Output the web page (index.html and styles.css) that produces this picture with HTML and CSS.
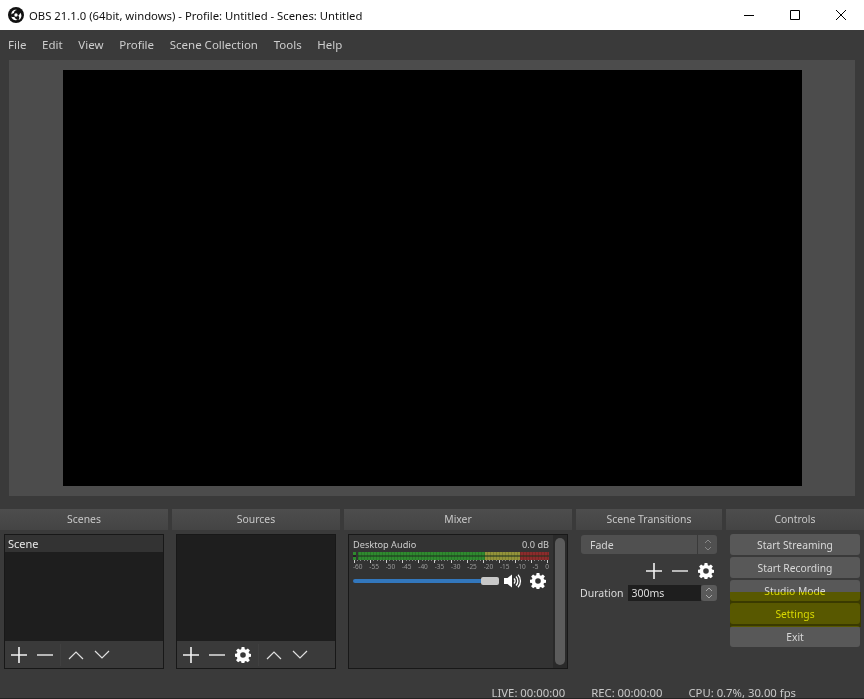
FILE: index.html
```html
<!DOCTYPE html>
<html lang="en">
<head>
<meta charset="utf-8">
<title>OBS</title>
<link rel="stylesheet" href="styles.css">
</head>
<body>
<svg class="defs" width="0" height="0">
  <defs>
    <symbol id="plus" viewBox="0 0 16 16"><path d="M8 0v16M0 8h16" stroke="#f2f2f2" stroke-width="1.6" fill="none"/></symbol>
    <symbol id="minus" viewBox="0 0 16 16"><path d="M0 8h16" stroke="#d8d8d8" stroke-width="1.6" fill="none"/></symbol>
    <symbol id="up" viewBox="0 0 16 16"><path d="M1 12l7-7 7 7" stroke="#e0e0e0" stroke-width="1.2" fill="none"/></symbol>
    <symbol id="down" viewBox="0 0 16 16"><path d="M1 4l7 7 7-7" stroke="#e0e0e0" stroke-width="1.2" fill="none"/></symbol>
    <symbol id="gear" viewBox="0 0 16 16"><path fill="#fff" fill-rule="evenodd" d="M6.600 0h2.800l.4 2.200 1.200.5 1.900-1.300 2 2-1.300 1.900.5 1.200 1.900.4v2.800l-2 .4-.5 1.200 1.300 1.900-2 2-1.900-1.300-1.200.5-.4 2H6.600l-.4-2-1.200-.5-1.900 1.300-2-2 1.300-1.900-.5-1.200-1.900-.4V6.800l1.900-.4.5-1.200L1.100 3.400l2-2L5 2.700l1.200-.5zM8 5.200a2.800 2.800 0 1 0 0 5.600 2.800 2.800 0 0 0 0-5.600z"/></symbol>
  </defs>
</svg>
<header class="titlebar">
  <svg class="logo" viewBox="0 0 16 16" width="16" height="16">
    <circle cx="8" cy="8" r="8" fill="#111"/>
    <path d="M3.500 7.500C3 4.500 6 2 9 3c-1.800.2-3 1.200-3 3-1 .2-1.900.7-2.500 1.500zM12.300 5.800c2 2.200 1.300 6-1.800 7.200 1-1.400 1.200-3-.2-4.200.7-.8 1.700-1.800 2-3zM3.200 9.500c.7 3 4 4.600 6.700 3.300-1.700-.3-3-1.200-3.500-3-1.200.4-2.200.4-3.200-.3z" fill="#fff"/>
    <circle cx="8" cy="8" r="1.700" fill="#fff"/>
  </svg>
  <span class="title-text">OBS 21.1.0 (64bit, windows) - Profile: Untitled - Scenes: Untitled</span>
  <div class="win-controls">
    <svg width="12" height="12" viewBox="0 0 12 12"><path d="M1 6.500h10" stroke="#000" fill="none"/></svg>
    <svg width="12" height="12" viewBox="0 0 12 12"><path d="M1.500 1.500h9v9h-9z" stroke="#000" fill="none"/></svg>
    <svg width="12" height="12" viewBox="0 0 12 12"><path d="M1 1l10 10M11 1L1 11" stroke="#000" fill="none"/></svg>
  </div>
</header>
<nav class="menubar">
  <span>File</span><span>Edit</span><span>View</span><span>Profile</span><span>Scene Collection</span><span>Tools</span><span>Help</span>
</nav>
<main class="preview"><div class="canvas"></div></main>
<section class="docks">
  <div class="dock dock-scenes">
    <h2 class="dock-head">Scenes</h2>
    <div class="dock-body">
      <div class="listbox">
        <div class="list"><div class="list-item">Scene</div></div>
        <div class="toolbar">
          <svg class="ic"><use href="#plus"/></svg>
          <svg class="ic"><use href="#minus"/></svg>
          <span class="sep"></span>
          <svg class="ic"><use href="#up"/></svg>
          <svg class="ic"><use href="#down"/></svg>
        </div>
      </div>
    </div>
  </div>
  <div class="dock dock-sources">
    <h2 class="dock-head">Sources</h2>
    <div class="dock-body">
      <div class="listbox">
        <div class="list"></div>
        <div class="toolbar">
          <svg class="ic"><use href="#plus"/></svg>
          <svg class="ic"><use href="#minus"/></svg>
          <svg class="ic"><use href="#gear"/></svg>
          <span class="sep"></span>
          <svg class="ic"><use href="#up"/></svg>
          <svg class="ic"><use href="#down"/></svg>
        </div>
      </div>
    </div>
  </div>
  <div class="dock dock-mixer">
    <h2 class="dock-head">Mixer</h2>
    <div class="dock-body">
      <div class="mixer">
        <div class="channel">
          <div class="ch-top"><span>Desktop Audio</span><span>0.0 dB</span></div>
          <div class="meter">
            <div class="meter-dot"></div>
            <div class="meter-bar"><i class="m-g"></i><i class="m-y"></i><i class="m-r"></i></div>
          </div>
          <div class="ticks"></div>
          <div class="scale"><span>-60</span><span>-55</span><span>-50</span><span>-45</span><span>-40</span><span>-35</span><span>-30</span><span>-25</span><span>-20</span><span>-15</span><span>-10</span><span>-5</span><span>0</span></div>
          <div class="ch-ctrl">
            <div class="slider"><div class="slider-fill"></div><div class="slider-knob"></div></div>
            <svg class="spk" width="18" height="14" viewBox="0 0 18 14"><path d="M0 4h3.500L8 .5v13L3.500 10H0z" fill="#fff"/><path d="M10 4.500a3.500 3.500 0 0 1 0 5M12 2.500a6.500 6.500 0 0 1 0 9M14 .8a9 9 0 0 1 0 12.400" stroke="#fff" stroke-width="1.300" fill="none"/></svg>
            <svg class="ic ch-gear"><use href="#gear"/></svg>
          </div>
        </div>
        <div class="scrollbar"><div class="scroll-thumb"></div></div>
      </div>
    </div>
  </div>
  <div class="dock dock-trans">
    <h2 class="dock-head">Scene Transitions</h2>
    <div class="dock-body trans">
      <div class="combo"><span class="combo-text">Fade</span><span class="spin"><svg width="8" height="14" viewBox="0 0 8 14"><path d="M1 5l3-3 3 3M1 9l3 3 3-3" stroke="#888" fill="none"/></svg></span></div>
      <div class="trans-tools">
        <svg class="ic"><use href="#plus"/></svg>
        <svg class="ic"><use href="#minus"/></svg>
        <svg class="ic"><use href="#gear"/></svg>
      </div>
      <div class="duration">
        <span>Duration</span>
        <span class="dur-input">300ms</span>
        <span class="spin spin-s"><svg width="8" height="14" viewBox="0 0 8 14"><path d="M1 5l3-3 3 3M1 9l3 3 3-3" stroke="#aaa" fill="none"/></svg></span>
      </div>
    </div>
  </div>
  <div class="dock dock-controls">
    <h2 class="dock-head">Controls</h2>
    <div class="dock-body controls">
      <button class="btn">Start Streaming</button>
      <button class="btn">Start Recording</button>
      <button class="btn">Studio Mode</button>
      <button class="btn">Settings</button>
      <button class="btn">Exit</button>
      <div class="highlight"></div>
    </div>
  </div>
</section>
<footer class="statusbar">
  <span>LIVE: 00:00:00</span>
  <span class="st-rec">REC: 00:00:00</span>
  <span class="st-cpu">CPU: 0.7%, 30.00 fps</span>
</footer>
</body>
</html>
```

FILE: styles.css
```css
* { box-sizing: border-box; }
html, body { margin: 0; padding: 0; }
body {
  width: 864px;
  height: 699px;
  overflow: hidden;
  background: #3a3a3a;
  color: #dcdcdc;
  font-family: "Noto Sans", "Open Sans", sans-serif;
  font-size: 11px;
  display: flex;
  flex-direction: column;
}
.defs { position: absolute; }
.titlebar {
  flex: none;
  height: 30px;
  background: #fff;
  color: #111;
  display: flex;
  align-items: center;
  padding-left: 8px;
  font-size: 11.300px;
}
.logo { margin-right: 5px; }
.title-text { flex: 1; }
.win-controls { display: flex; align-items: center; gap: 34px; padding-right: 17px; }
.menubar {
  flex: none;
  height: 30px;
  background: #3a3a3a;
  display: flex;
  align-items: center;
  padding: 0 0 2px 8px;
  gap: 15.700px;
  font-size: 11.500px;
  color: #cdcdcd;
}
.preview {
  flex: none;
  height: 436px;
  margin: 0 9px;
  background: #4c4c4c;
  padding: 10px 53px 10px 54px;
}
.canvas { width: 100%; height: 100%; background: #000; }
.docks {
  flex: none;
  margin-top: 13px;
  height: 177px;
  display: flex;
  gap: 4px;
}
.dock { display: flex; flex-direction: column; }
.dock-scenes, .dock-sources { width: 168px; }
.dock-mixer { width: 228px; }
.dock-trans { width: 146px; }
.dock-controls { width: 138px; }
.dock-head {
  margin: 0;
  height: 21px;
  background: linear-gradient(#4d4d4d, #444);
  font-weight: 400;
  font-size: 10.400px;
  line-height: 21px;
  text-align: center;
  color: #c8c8c8;
}
.dock-body { flex: 1; padding: 4px 4px 9px; display: flex; flex-direction: column; position: relative; }
.listbox {
  height: 135px;
  border: 1px solid #181818;
  background: #1e1e1e;
  display: flex;
  flex-direction: column;
}
.list { flex: 1; }
.list-item {
  height: 17px;
  background: #333;
  color: #e8e8e8;
  padding-left: 3px;
  line-height: 17px;
  font-size: 11px;
}
.toolbar {
  height: 27px;
  background: #3a3a3a;
  display: flex;
  align-items: center;
  padding-left: 6px;
  gap: 10px;
}
.ic { width: 16px; height: 16px; flex: none; }
.sep { width: 1px; height: 22px; background: #404040; margin: 0 -3px; }
.mixer {
  height: 135px;
  border: 1px solid #181818;
  display: flex;
  background: #333;
}
.channel { flex: 1; padding: 4px 4px 0; }
.ch-top { display: flex; justify-content: space-between; font-size: 9.200px; line-height: 12px; color: #ccc; }
.meter { display: flex; gap: 2px; margin-top: 1px; height: 8px; }
.meter-dot { width: 3px; background: linear-gradient(#2f8a2f 0, #2f8a2f 3px, #222 3px, #222 5px, #2f8a2f 5px); }
.meter-bar {
  flex: 1;
  display: flex;
  position: relative;
}
.meter-bar::after {
  content: "";
  position: absolute;
  inset: 0;
  background:
    linear-gradient(transparent 3px, rgba(30, 50, 30, 0.55) 3px, rgba(30, 50, 30, 0.55) 5px, transparent 5px),
    repeating-linear-gradient(90deg, rgba(0, 0, 0, 0.14) 0, rgba(0, 0, 0, 0.14) 1px, transparent 1px, transparent 3px);
}
.meter-bar i { display: block; height: 100%; }
.m-g { width: 127px; background: #2f8a2f; }
.m-y { width: 35px; background: #93933a; }
.m-r { flex: 1; background: #8c2c2c; }
.ticks {
  height: 3px;
  background:
    repeating-linear-gradient(90deg, #d0d0d0 0, #d0d0d0 1px, transparent 1px, transparent 16.100px) 1px 0 / 100% 3px no-repeat,
    repeating-linear-gradient(90deg, #8a8a8a 0, #8a8a8a 1px, transparent 1px, transparent 3.220px) 1px 0 / 100% 1px no-repeat;
}
.scale { display: flex; justify-content: space-between; font-size: 6.500px; line-height: 8px; color: #999; }
.ch-ctrl { display: flex; align-items: center; margin-top: 2px; height: 16px; }
.slider { width: 146px; height: 8px; display: flex; align-items: center; flex: none; }
.slider-fill { flex: 1; height: 4px; background: #3277bd; border-radius: 2px 0 0 2px; }
.slider-knob { width: 18px; height: 8px; background: #c8c8c8; border-radius: 2px; }
.spk { margin-left: 5px; flex: none; }
.ch-gear { margin-left: 8px; }
.scrollbar { width: 14px; padding: 3px 2px; background: #2a2a2a; flex: none; }
.scroll-thumb { height: 100%; background: #5c5c5c; border-radius: 5px; }
.dock-body.trans { padding: 5px 5px 0; }
.combo { flex: none; height: 19px; display: flex; background: #505050; border-radius: 3px; }
.combo-text { flex: 1; padding-left: 9px; line-height: 21px; font-size: 10.500px; color: #d4d4d4; }
.spin { width: 20px; border-left: 1px solid #3a3a3a; display: flex; align-items: center; justify-content: center; }
.trans-tools { flex: none; display: flex; justify-content: flex-end; gap: 10px; margin-top: 9px; padding-right: 3px; }
.duration { flex: none; display: flex; align-items: center; height: 16px; margin-top: 6px; font-size: 10.500px; margin-left: -1px; }
.dur-input { width: 74px; height: 16px; background: #1e1e1e; margin-left: 4px; padding-left: 4px; line-height: 17px; color: #ddd; }
.spin-s { height: 16px; width: 16px; background: #5a5a5a; border-radius: 3px; border: 0; }
.dock-body.controls { padding: 4px 4px 0; gap: 2px; }
.btn {
  display: block;
  flex: none;
  width: 130px;
  height: 21px;
  background: #585858;
  border: 0;
  border-radius: 3px;
  color: #d8d8d8;
  font-family: inherit;
  font-size: 10.300px;
  padding: 1px 0 0;
}
.highlight {
  position: absolute;
  left: 4px;
  top: 62px;
  width: 131px;
  height: 35px;
  background: #ff0;
  mix-blend-mode: multiply;
  pointer-events: none;
}
.statusbar {
  flex: 1;
  min-height: 0;
  display: flex;
  align-items: center;
  justify-content: flex-end;
  font-size: 11.300px;
  line-height: 13px;
  color: #c8c8c8;
  padding: 0 68px 0 0;
  border-bottom: 1px solid #222;
}
.st-rec { margin-left: 26px; }
.st-cpu { margin-left: 26px; }
```
